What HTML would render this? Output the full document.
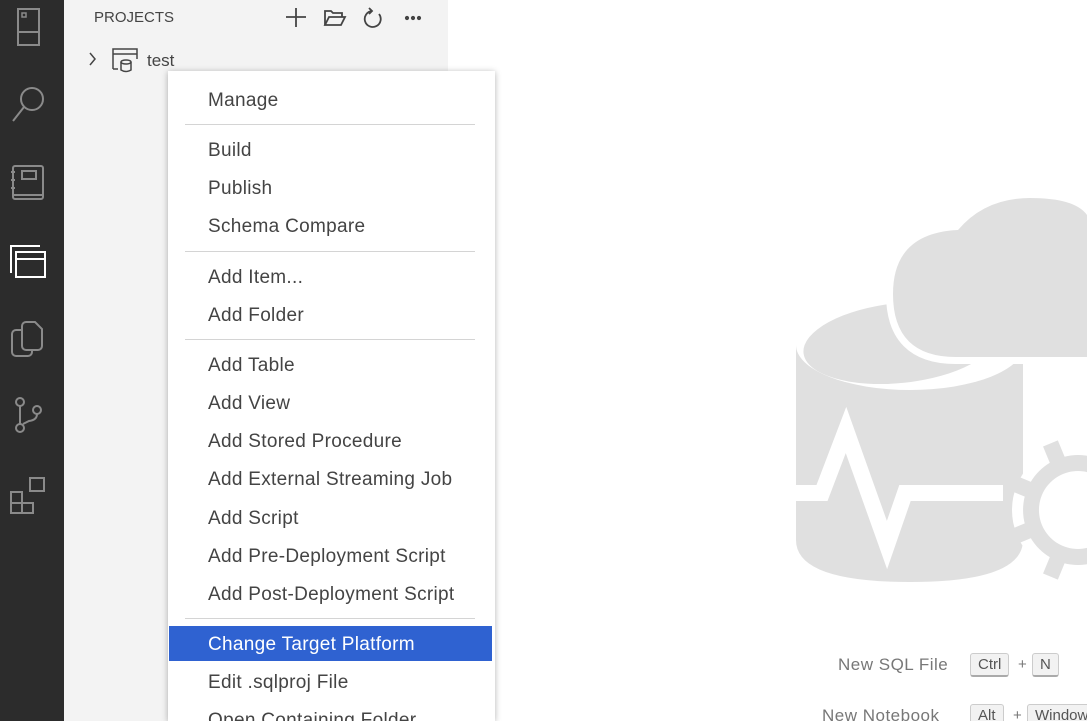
<!DOCTYPE html>
<html><head><meta charset="utf-8"><style>
*{margin:0;padding:0;box-sizing:border-box}
html,body{width:1087px;height:721px;overflow:hidden}
body{background:#fff;font-family:"Liberation Sans",sans-serif;position:relative}
#act{position:absolute;left:0;top:0;width:64px;height:721px;background:#2c2c2c}
#side{position:absolute;left:64px;top:0;width:384px;height:721px;background:#f3f3f3}
.t{position:absolute;white-space:nowrap}
#menu{position:absolute;left:168px;top:71px;width:327px;height:650px;background:#fff;box-shadow:0 1px 6px rgba(0,0,0,.3);overflow:hidden}
.mi{position:absolute;left:40px;font-size:19px;color:#444;line-height:24px;white-space:nowrap;letter-spacing:.3px}
.sep{position:absolute;left:17px;width:290px;height:1px;background:#d4d4d4}
.hl{position:absolute;left:1px;top:555px;width:323px;height:35px;background:#2f62d1}
.key{position:absolute;height:24px;border:1px solid #ccc;border-bottom:2px solid #aaa;border-radius:3px;background:#f2f2f2;font-size:15px;color:#555;padding:3px 7px;line-height:16px}
</style></head><body>
<div id="act">
<svg width="64" height="721" fill="none" stroke="#8a8a8a" stroke-width="2">
<rect x="18" y="9" width="21" height="36"/><line x1="18" y1="32" x2="39" y2="32"/><rect x="22" y="13" width="4" height="4" stroke-width="1.5"/>
<circle cx="32" cy="99" r="11"/><line x1="24" y1="107" x2="13" y2="121"/>
<rect x="13" y="166" width="30" height="33" rx="2"/><rect x="22" y="171" width="14" height="8"/><line x1="11" y1="172" x2="15" y2="172"/><line x1="11" y1="180" x2="15" y2="180"/><line x1="11" y1="188" x2="15" y2="188"/><line x1="13" y1="195" x2="43" y2="195"/>
<g stroke="#fff"><path d="M11 273V246H40"/><rect x="16" y="252" width="29" height="25"/><line x1="16" y1="259" x2="45" y2="259"/></g>
<path d="M22 330h-6a4 4 0 0 0-4 4v18a4 4 0 0 0 4 4h12a4 4 0 0 0 4-4v-2"/><path d="M22 326a4 4 0 0 1 4-4h9l7 7v17a4 4 0 0 1-4 4h-12a4 4 0 0 1-4-4z"/>
<circle cx="20" cy="402" r="4"/><circle cx="20" cy="428" r="4"/><circle cx="37" cy="410" r="4"/><line x1="20" y1="406" x2="20" y2="424"/><path d="M37 414q0 6-8 7l-6 3"/>
<rect x="11" y="492" width="11" height="11"/><rect x="11" y="503" width="11" height="10"/><rect x="22" y="503" width="11" height="10"/><rect x="30" y="478" width="14" height="13"/>
</svg></div>
<div id="side">
<div class="t" style="left:30px;top:9px;font-size:15px;color:#444">PROJECTS</div>
<svg style="position:absolute;left:216px;top:4px" width="170" height="28" fill="none" stroke="#444" stroke-width="1.8">
<line x1="16" y1="4" x2="16" y2="23"/><line x1="6" y1="13" x2="26" y2="13"/>
<path d="M45 21V7h6l2 2h9v4"/><path d="M45 21l4-8h16l-4 8z"/>
<path d="M92 7a8 8 0 1 0 7 3"/><path d="M89 4l3 3-3 3"/>
<circle cx="127" cy="14" r="1.2" fill="#444"/><circle cx="133" cy="14" r="1.2" fill="#444"/><circle cx="139" cy="14" r="1.2" fill="#444"/>
</svg>
<svg style="position:absolute;left:22px;top:48px" width="60" height="28" fill="none" stroke="#444" stroke-width="1.5">
<path d="M4 5l5 6-5 6"/>
<path d="M27 21V1h24v10"/><line x1="27" y1="6" x2="51" y2="6"/><line x1="27" y1="21" x2="32" y2="21"/>
<ellipse cx="40" cy="14" rx="5" ry="2"/><path d="M35 14v8q5 3 10 0v-8"/>
</svg>
<div class="t" style="left:83px;top:51px;font-size:17px;color:#444">test</div>
</div>
<svg style="position:absolute;left:0;top:0" width="1087" height="721">
<g fill="#e0e0e0">
<path d="M796 345 L796 540 Q796 582 910 582 Q1023 582 1023 540 L1023 345 Z"/>
<ellipse cx="910" cy="345" rx="114" ry="45" fill="#fff"/>
<ellipse cx="900" cy="343" rx="97" ry="40" transform="rotate(-6 900 343)"/>
<path d="M956 357 Q893 357 893 294 Q893 233 958 230 Q985 198 1030 198 Q1075 198 1087 215 L1087 357 Z" stroke="#fff" stroke-width="14" paint-order="stroke"/>
<polyline points="786,493 822,493 846,430 887,545 905,493 1003,493" fill="none" stroke="#fff" stroke-width="16"/>
<circle cx="1078" cy="510" r="66" fill="#fff"/>
<path d="M1078 455a55 55 0 1 0 0.1 0zM1078 471a39 39 0 1 1 -0.1 0z" fill-rule="evenodd"/>
</g>
<g stroke="#e0e0e0" stroke-width="16" transform="translate(1078 510)">
<line x1="-50" y1="0" x2="-72" y2="0" transform="rotate(22.5)"/>
<line x1="-50" y1="0" x2="-72" y2="0" transform="rotate(-22.5)"/>
<line x1="-50" y1="0" x2="-72" y2="0" transform="rotate(67.5)"/>
<line x1="-50" y1="0" x2="-72" y2="0" transform="rotate(-67.5)"/>
</g>
</svg>
<div class="t" style="left:838px;top:655px;font-size:17px;color:#777;letter-spacing:.5px">New SQL File</div>
<div class="key" style="left:970px;top:653px">Ctrl</div>
<div class="t" style="left:1018px;top:656px;font-size:15px;color:#777">+</div>
<div class="key" style="left:1032px;top:653px">N</div>
<div class="t" style="left:822px;top:706px;font-size:17px;color:#777;letter-spacing:.5px">New Notebook</div>
<div class="key" style="left:970px;top:704px">Alt</div>
<div class="t" style="left:1013px;top:707px;font-size:15px;color:#777">+</div>
<div class="key" style="left:1027px;top:704px">Windows</div>
<div id="menu">
<div class="mi" style="top:18px">Manage</div>
<div class="sep" style="top:53px"></div>
<div class="mi" style="top:68px">Build</div>
<div class="mi" style="top:106px">Publish</div>
<div class="mi" style="top:144px">Schema Compare</div>
<div class="sep" style="top:180px"></div>
<div class="mi" style="top:195px">Add Item...</div>
<div class="mi" style="top:233px">Add Folder</div>
<div class="sep" style="top:268px"></div>
<div class="mi" style="top:283px">Add Table</div>
<div class="mi" style="top:321px">Add View</div>
<div class="mi" style="top:359px">Add Stored Procedure</div>
<div class="mi" style="top:397px">Add External Streaming Job</div>
<div class="mi" style="top:436px">Add Script</div>
<div class="mi" style="top:474px">Add Pre-Deployment Script</div>
<div class="mi" style="top:512px">Add Post-Deployment Script</div>
<div class="sep" style="top:547px"></div>
<div class="hl"></div>
<div class="mi" style="top:562px;color:#fff">Change Target Platform</div>
<div class="mi" style="top:600px">Edit .sqlproj File</div>
<div class="mi" style="top:638px">Open Containing Folder</div>
</div>
</body></html>
